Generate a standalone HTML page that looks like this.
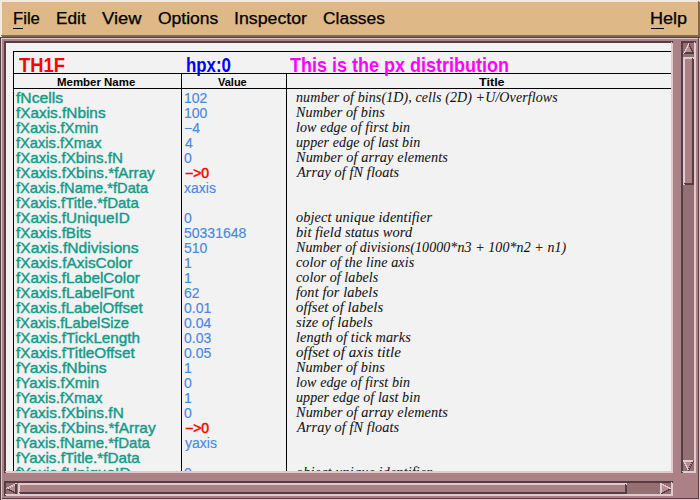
<!DOCTYPE html><html><head><meta charset="utf-8"><style>
html,body{margin:0;padding:0;background:#ab8186}
div,span{position:absolute;box-sizing:border-box}
.t{font-variant-ligatures:none;white-space:pre;line-height:24px;height:24px;transform-origin:0 0;-webkit-text-stroke:0.4px currentColor}
.mn{font-family:"Liberation Sans",sans-serif;font-size:16px;color:#000;-webkit-text-stroke:0.25px currentColor}
.nm{font-family:"Liberation Sans",sans-serif;font-size:15px;color:#129a89}
.vl{font-family:"Liberation Sans",sans-serif;font-size:14px;color:#4a88e0;-webkit-text-stroke:0.15px currentColor}
.pt{font-family:"Liberation Sans",sans-serif;font-size:14px;color:#f00;-webkit-text-stroke:0.5px currentColor}
.ti{font-family:"Liberation Serif",serif;font-style:italic;font-size:14px;color:#111111;-webkit-text-stroke:0.05px currentColor;font-variant-ligatures:none;letter-spacing:0.1px}
.hd{font-family:"Liberation Sans",sans-serif;font-weight:bold;font-size:11px;color:#000;-webkit-text-stroke:0}
.bg{font-family:"Liberation Sans",sans-serif;font-weight:bold;font-size:20px;-webkit-text-stroke:0}
html,body{width:700px;height:500px;overflow:hidden}</style></head><body>
<div style="left:0px;top:0px;width:700px;height:37px;background:#deb887;"></div>
<div style="left:0px;top:0px;width:700px;height:2px;background:#f5ead9;"></div>
<div style="left:0px;top:0px;width:2px;height:37px;background:#f5ead9;"></div>
<div style="left:2px;top:36px;width:698px;height:1px;background:#806a4b;"></div>
<div style="left:699px;top:2px;width:1px;height:35px;background:#806a4b;"></div>
<div style="left:1px;top:35px;width:699px;height:1px;background:#806a4b;"></div>
<div style="left:698px;top:1px;width:1px;height:36px;background:#806a4b;"></div>
<div style="left:0px;top:37px;width:700px;height:1px;background:#543e43;"></div>
<div style="left:0px;top:37px;width:1px;height:463px;background:#543e43;"></div>
<div style="left:1px;top:499px;width:699px;height:1px;background:#dfcbcf;"></div>
<div style="left:699px;top:38px;width:1px;height:462px;background:#dfcbcf;"></div>
<div style="left:1px;top:38px;width:698px;height:1px;background:#dfcbcf;"></div>
<div style="left:1px;top:38px;width:1px;height:461px;background:#dfcbcf;"></div>
<div style="left:2px;top:498px;width:697px;height:1px;background:#543e43;"></div>
<div style="left:698px;top:39px;width:1px;height:460px;background:#543e43;"></div>
<div style="left:698px;top:38px;width:1px;height:1px;background:#543e43;"></div>
<div style="left:4px;top:41px;width:669px;height:2px;background:#543e43;"></div>
<div style="left:4px;top:41px;width:2px;height:432px;background:#543e43;"></div>
<div style="left:6px;top:472px;width:667px;height:1px;background:#dfcbcf;"></div>
<div style="left:672px;top:43px;width:1px;height:430px;background:#dfcbcf;"></div>
<div style="left:5px;top:471px;width:668px;height:1px;background:#dfcbcf;"></div>
<div style="left:671px;top:42px;width:1px;height:431px;background:#dfcbcf;"></div>
<div style="left:6px;top:43px;width:665px;height:428px;background:#f2f2f2;"></div>
<div style="left:681px;top:41px;width:15px;height:2px;background:#543e43;"></div>
<div style="left:681px;top:41px;width:2px;height:432px;background:#543e43;"></div>
<div style="left:683px;top:472px;width:13px;height:1px;background:#dfcbcf;"></div>
<div style="left:695px;top:43px;width:1px;height:430px;background:#dfcbcf;"></div>
<div style="left:682px;top:471px;width:14px;height:1px;background:#dfcbcf;"></div>
<div style="left:694px;top:42px;width:1px;height:431px;background:#dfcbcf;"></div>
<div style="left:683px;top:43px;width:11px;height:428px;background:#946f73;"></div>
<div style="left:683px;top:57px;width:11px;height:2px;background:#dfcbcf;"></div>
<div style="left:683px;top:57px;width:2px;height:128px;background:#dfcbcf;"></div>
<div style="left:685px;top:184px;width:9px;height:1px;background:#543e43;"></div>
<div style="left:693px;top:59px;width:1px;height:126px;background:#543e43;"></div>
<div style="left:684px;top:183px;width:10px;height:1px;background:#543e43;"></div>
<div style="left:692px;top:58px;width:1px;height:127px;background:#543e43;"></div>
<div style="left:685px;top:59px;width:7px;height:124px;background:#ab8186;"></div>
<div style="left:4px;top:481px;width:669px;height:2px;background:#543e43;"></div>
<div style="left:4px;top:481px;width:2px;height:15px;background:#543e43;"></div>
<div style="left:6px;top:495px;width:667px;height:1px;background:#dfcbcf;"></div>
<div style="left:672px;top:483px;width:1px;height:13px;background:#dfcbcf;"></div>
<div style="left:5px;top:494px;width:668px;height:1px;background:#dfcbcf;"></div>
<div style="left:671px;top:482px;width:1px;height:14px;background:#dfcbcf;"></div>
<div style="left:6px;top:483px;width:665px;height:11px;background:#946f73;"></div>
<div style="left:18px;top:483px;width:609px;height:2px;background:#dfcbcf;"></div>
<div style="left:18px;top:483px;width:2px;height:11px;background:#dfcbcf;"></div>
<div style="left:20px;top:493px;width:607px;height:1px;background:#543e43;"></div>
<div style="left:626px;top:485px;width:1px;height:9px;background:#543e43;"></div>
<div style="left:19px;top:492px;width:608px;height:1px;background:#543e43;"></div>
<div style="left:625px;top:484px;width:1px;height:10px;background:#543e43;"></div>
<div style="left:20px;top:485px;width:605px;height:7px;background:#ab8186;"></div>
<svg style="position:absolute;left:683px;top:43px" width="11" height="11" shape-rendering="crispEdges"><rect x="5" y="0" width="1" height="1" fill="#dfcbcf"/><rect x="6" y="1" width="1" height="1" fill="#543e43"/><rect x="5" y="1" width="1" height="1" fill="#dfcbcf"/><rect x="5" y="2" width="1" height="1" fill="#dfcbcf"/><rect x="6" y="2" width="1" height="1" fill="#543e43"/><rect x="4" y="2" width="1" height="1" fill="#dfcbcf"/><rect x="5" y="3" width="1" height="1" fill="#b68b91"/><rect x="6" y="3" width="1" height="1" fill="#543e43"/><rect x="7" y="3" width="1" height="1" fill="#543e43"/><rect x="4" y="3" width="1" height="1" fill="#dfcbcf"/><rect x="4" y="4" width="1" height="1" fill="#dfcbcf"/><rect x="5" y="4" width="1" height="1" fill="#b68b91"/><rect x="6" y="4" width="1" height="1" fill="#b68b91"/><rect x="7" y="4" width="1" height="1" fill="#543e43"/><rect x="3" y="4" width="1" height="1" fill="#dfcbcf"/><rect x="4" y="5" width="1" height="1" fill="#b68b91"/><rect x="5" y="5" width="1" height="1" fill="#b68b91"/><rect x="6" y="5" width="1" height="1" fill="#b68b91"/><rect x="7" y="5" width="1" height="1" fill="#543e43"/><rect x="8" y="5" width="1" height="1" fill="#543e43"/><rect x="3" y="5" width="1" height="1" fill="#dfcbcf"/><rect x="3" y="6" width="1" height="1" fill="#dfcbcf"/><rect x="4" y="6" width="1" height="1" fill="#b68b91"/><rect x="5" y="6" width="1" height="1" fill="#b68b91"/><rect x="6" y="6" width="1" height="1" fill="#b68b91"/><rect x="7" y="6" width="1" height="1" fill="#b68b91"/><rect x="8" y="6" width="1" height="1" fill="#543e43"/><rect x="2" y="6" width="1" height="1" fill="#dfcbcf"/><rect x="3" y="7" width="1" height="1" fill="#b68b91"/><rect x="4" y="7" width="1" height="1" fill="#b68b91"/><rect x="5" y="7" width="1" height="1" fill="#b68b91"/><rect x="6" y="7" width="1" height="1" fill="#b68b91"/><rect x="7" y="7" width="1" height="1" fill="#b68b91"/><rect x="8" y="7" width="1" height="1" fill="#543e43"/><rect x="9" y="7" width="1" height="1" fill="#543e43"/><rect x="2" y="7" width="1" height="1" fill="#dfcbcf"/><rect x="2" y="8" width="1" height="1" fill="#dfcbcf"/><rect x="3" y="8" width="1" height="1" fill="#b68b91"/><rect x="4" y="8" width="1" height="1" fill="#b68b91"/><rect x="5" y="8" width="1" height="1" fill="#b68b91"/><rect x="6" y="8" width="1" height="1" fill="#b68b91"/><rect x="7" y="8" width="1" height="1" fill="#b68b91"/><rect x="8" y="8" width="1" height="1" fill="#b68b91"/><rect x="9" y="8" width="1" height="1" fill="#543e43"/><rect x="1" y="8" width="1" height="1" fill="#dfcbcf"/><rect x="2" y="9" width="1" height="1" fill="#543e43"/><rect x="3" y="9" width="1" height="1" fill="#543e43"/><rect x="4" y="9" width="1" height="1" fill="#543e43"/><rect x="5" y="9" width="1" height="1" fill="#543e43"/><rect x="6" y="9" width="1" height="1" fill="#543e43"/><rect x="7" y="9" width="1" height="1" fill="#543e43"/><rect x="8" y="9" width="1" height="1" fill="#543e43"/><rect x="9" y="9" width="1" height="1" fill="#543e43"/><rect x="10" y="9" width="1" height="1" fill="#543e43"/><rect x="1" y="9" width="1" height="1" fill="#dfcbcf"/><rect x="1" y="10" width="1" height="1" fill="#543e43"/><rect x="2" y="10" width="1" height="1" fill="#543e43"/><rect x="3" y="10" width="1" height="1" fill="#543e43"/><rect x="4" y="10" width="1" height="1" fill="#543e43"/><rect x="5" y="10" width="1" height="1" fill="#543e43"/><rect x="6" y="10" width="1" height="1" fill="#543e43"/><rect x="7" y="10" width="1" height="1" fill="#543e43"/><rect x="8" y="10" width="1" height="1" fill="#543e43"/><rect x="9" y="10" width="1" height="1" fill="#543e43"/><rect x="10" y="10" width="1" height="1" fill="#543e43"/><rect x="0" y="10" width="1" height="1" fill="#dfcbcf"/></svg>
<svg style="position:absolute;left:683px;top:460px" width="11" height="11" shape-rendering="crispEdges"><rect x="1" y="0" width="1" height="1" fill="#dfcbcf"/><rect x="2" y="0" width="1" height="1" fill="#dfcbcf"/><rect x="3" y="0" width="1" height="1" fill="#dfcbcf"/><rect x="4" y="0" width="1" height="1" fill="#dfcbcf"/><rect x="5" y="0" width="1" height="1" fill="#dfcbcf"/><rect x="6" y="0" width="1" height="1" fill="#dfcbcf"/><rect x="7" y="0" width="1" height="1" fill="#dfcbcf"/><rect x="8" y="0" width="1" height="1" fill="#dfcbcf"/><rect x="9" y="0" width="1" height="1" fill="#dfcbcf"/><rect x="0" y="0" width="1" height="1" fill="#dfcbcf"/><rect x="1" y="1" width="1" height="1" fill="#dfcbcf"/><rect x="2" y="1" width="1" height="1" fill="#dfcbcf"/><rect x="3" y="1" width="1" height="1" fill="#dfcbcf"/><rect x="4" y="1" width="1" height="1" fill="#dfcbcf"/><rect x="5" y="1" width="1" height="1" fill="#dfcbcf"/><rect x="6" y="1" width="1" height="1" fill="#dfcbcf"/><rect x="7" y="1" width="1" height="1" fill="#dfcbcf"/><rect x="8" y="1" width="1" height="1" fill="#dfcbcf"/><rect x="9" y="1" width="1" height="1" fill="#dfcbcf"/><rect x="0" y="1" width="1" height="1" fill="#dfcbcf"/><rect x="10" y="1" width="1" height="1" fill="#543e43"/><rect x="2" y="2" width="1" height="1" fill="#b68b91"/><rect x="3" y="2" width="1" height="1" fill="#b68b91"/><rect x="4" y="2" width="1" height="1" fill="#b68b91"/><rect x="5" y="2" width="1" height="1" fill="#b68b91"/><rect x="6" y="2" width="1" height="1" fill="#b68b91"/><rect x="7" y="2" width="1" height="1" fill="#b68b91"/><rect x="8" y="2" width="1" height="1" fill="#543e43"/><rect x="9" y="2" width="1" height="1" fill="#543e43"/><rect x="1" y="2" width="1" height="1" fill="#dfcbcf"/><rect x="2" y="3" width="1" height="1" fill="#dfcbcf"/><rect x="3" y="3" width="1" height="1" fill="#b68b91"/><rect x="4" y="3" width="1" height="1" fill="#b68b91"/><rect x="5" y="3" width="1" height="1" fill="#b68b91"/><rect x="6" y="3" width="1" height="1" fill="#b68b91"/><rect x="7" y="3" width="1" height="1" fill="#b68b91"/><rect x="8" y="3" width="1" height="1" fill="#b68b91"/><rect x="9" y="3" width="1" height="1" fill="#543e43"/><rect x="1" y="3" width="1" height="1" fill="#dfcbcf"/><rect x="3" y="4" width="1" height="1" fill="#b68b91"/><rect x="4" y="4" width="1" height="1" fill="#b68b91"/><rect x="5" y="4" width="1" height="1" fill="#b68b91"/><rect x="6" y="4" width="1" height="1" fill="#b68b91"/><rect x="7" y="4" width="1" height="1" fill="#543e43"/><rect x="8" y="4" width="1" height="1" fill="#543e43"/><rect x="2" y="4" width="1" height="1" fill="#dfcbcf"/><rect x="3" y="5" width="1" height="1" fill="#dfcbcf"/><rect x="4" y="5" width="1" height="1" fill="#b68b91"/><rect x="5" y="5" width="1" height="1" fill="#b68b91"/><rect x="6" y="5" width="1" height="1" fill="#b68b91"/><rect x="7" y="5" width="1" height="1" fill="#b68b91"/><rect x="8" y="5" width="1" height="1" fill="#543e43"/><rect x="2" y="5" width="1" height="1" fill="#dfcbcf"/><rect x="4" y="6" width="1" height="1" fill="#b68b91"/><rect x="5" y="6" width="1" height="1" fill="#b68b91"/><rect x="6" y="6" width="1" height="1" fill="#543e43"/><rect x="7" y="6" width="1" height="1" fill="#543e43"/><rect x="3" y="6" width="1" height="1" fill="#dfcbcf"/><rect x="4" y="7" width="1" height="1" fill="#dfcbcf"/><rect x="5" y="7" width="1" height="1" fill="#b68b91"/><rect x="6" y="7" width="1" height="1" fill="#b68b91"/><rect x="7" y="7" width="1" height="1" fill="#543e43"/><rect x="3" y="7" width="1" height="1" fill="#dfcbcf"/><rect x="5" y="8" width="1" height="1" fill="#543e43"/><rect x="6" y="8" width="1" height="1" fill="#543e43"/><rect x="4" y="8" width="1" height="1" fill="#dfcbcf"/><rect x="5" y="9" width="1" height="1" fill="#dfcbcf"/><rect x="6" y="9" width="1" height="1" fill="#543e43"/><rect x="4" y="9" width="1" height="1" fill="#dfcbcf"/><rect x="5" y="10" width="1" height="1" fill="#543e43"/></svg>
<svg style="position:absolute;left:6px;top:483px" width="11" height="11" shape-rendering="crispEdges"><rect x="0" y="5" width="1" height="1" fill="#dfcbcf"/><rect x="1" y="5" width="1" height="1" fill="#b68b91"/><rect x="1" y="6" width="1" height="1" fill="#543e43"/><rect x="1" y="4" width="1" height="1" fill="#dfcbcf"/><rect x="2" y="5" width="1" height="1" fill="#dfcbcf"/><rect x="2" y="6" width="1" height="1" fill="#543e43"/><rect x="2" y="4" width="1" height="1" fill="#dfcbcf"/><rect x="3" y="4" width="1" height="1" fill="#b68b91"/><rect x="3" y="5" width="1" height="1" fill="#b68b91"/><rect x="3" y="6" width="1" height="1" fill="#543e43"/><rect x="3" y="7" width="1" height="1" fill="#543e43"/><rect x="3" y="3" width="1" height="1" fill="#dfcbcf"/><rect x="4" y="4" width="1" height="1" fill="#dfcbcf"/><rect x="4" y="5" width="1" height="1" fill="#b68b91"/><rect x="4" y="6" width="1" height="1" fill="#b68b91"/><rect x="4" y="7" width="1" height="1" fill="#543e43"/><rect x="4" y="3" width="1" height="1" fill="#dfcbcf"/><rect x="5" y="3" width="1" height="1" fill="#b68b91"/><rect x="5" y="4" width="1" height="1" fill="#b68b91"/><rect x="5" y="5" width="1" height="1" fill="#b68b91"/><rect x="5" y="6" width="1" height="1" fill="#b68b91"/><rect x="5" y="7" width="1" height="1" fill="#543e43"/><rect x="5" y="8" width="1" height="1" fill="#543e43"/><rect x="5" y="2" width="1" height="1" fill="#dfcbcf"/><rect x="6" y="3" width="1" height="1" fill="#dfcbcf"/><rect x="6" y="4" width="1" height="1" fill="#b68b91"/><rect x="6" y="5" width="1" height="1" fill="#b68b91"/><rect x="6" y="6" width="1" height="1" fill="#b68b91"/><rect x="6" y="7" width="1" height="1" fill="#b68b91"/><rect x="6" y="8" width="1" height="1" fill="#543e43"/><rect x="6" y="2" width="1" height="1" fill="#dfcbcf"/><rect x="7" y="2" width="1" height="1" fill="#b68b91"/><rect x="7" y="3" width="1" height="1" fill="#b68b91"/><rect x="7" y="4" width="1" height="1" fill="#b68b91"/><rect x="7" y="5" width="1" height="1" fill="#b68b91"/><rect x="7" y="6" width="1" height="1" fill="#b68b91"/><rect x="7" y="7" width="1" height="1" fill="#b68b91"/><rect x="7" y="8" width="1" height="1" fill="#543e43"/><rect x="7" y="9" width="1" height="1" fill="#543e43"/><rect x="7" y="1" width="1" height="1" fill="#dfcbcf"/><rect x="8" y="2" width="1" height="1" fill="#dfcbcf"/><rect x="8" y="3" width="1" height="1" fill="#b68b91"/><rect x="8" y="4" width="1" height="1" fill="#b68b91"/><rect x="8" y="5" width="1" height="1" fill="#b68b91"/><rect x="8" y="6" width="1" height="1" fill="#b68b91"/><rect x="8" y="7" width="1" height="1" fill="#b68b91"/><rect x="8" y="8" width="1" height="1" fill="#b68b91"/><rect x="8" y="9" width="1" height="1" fill="#543e43"/><rect x="8" y="1" width="1" height="1" fill="#dfcbcf"/><rect x="9" y="1" width="1" height="1" fill="#543e43"/><rect x="9" y="2" width="1" height="1" fill="#543e43"/><rect x="9" y="3" width="1" height="1" fill="#543e43"/><rect x="9" y="4" width="1" height="1" fill="#543e43"/><rect x="9" y="5" width="1" height="1" fill="#543e43"/><rect x="9" y="6" width="1" height="1" fill="#543e43"/><rect x="9" y="7" width="1" height="1" fill="#543e43"/><rect x="9" y="8" width="1" height="1" fill="#543e43"/><rect x="9" y="9" width="1" height="1" fill="#543e43"/><rect x="9" y="10" width="1" height="1" fill="#543e43"/><rect x="9" y="0" width="1" height="1" fill="#dfcbcf"/><rect x="10" y="1" width="1" height="1" fill="#543e43"/><rect x="10" y="2" width="1" height="1" fill="#543e43"/><rect x="10" y="3" width="1" height="1" fill="#543e43"/><rect x="10" y="4" width="1" height="1" fill="#543e43"/><rect x="10" y="5" width="1" height="1" fill="#543e43"/><rect x="10" y="6" width="1" height="1" fill="#543e43"/><rect x="10" y="7" width="1" height="1" fill="#543e43"/><rect x="10" y="8" width="1" height="1" fill="#543e43"/><rect x="10" y="9" width="1" height="1" fill="#543e43"/><rect x="10" y="10" width="1" height="1" fill="#543e43"/><rect x="10" y="0" width="1" height="1" fill="#dfcbcf"/></svg>
<svg style="position:absolute;left:660px;top:483px" width="11" height="11" shape-rendering="crispEdges"><rect x="0" y="1" width="1" height="1" fill="#dfcbcf"/><rect x="0" y="2" width="1" height="1" fill="#dfcbcf"/><rect x="0" y="3" width="1" height="1" fill="#dfcbcf"/><rect x="0" y="4" width="1" height="1" fill="#dfcbcf"/><rect x="0" y="5" width="1" height="1" fill="#dfcbcf"/><rect x="0" y="6" width="1" height="1" fill="#dfcbcf"/><rect x="0" y="7" width="1" height="1" fill="#dfcbcf"/><rect x="0" y="8" width="1" height="1" fill="#dfcbcf"/><rect x="0" y="9" width="1" height="1" fill="#dfcbcf"/><rect x="0" y="0" width="1" height="1" fill="#dfcbcf"/><rect x="0" y="10" width="1" height="1" fill="#dfcbcf"/><rect x="1" y="1" width="1" height="1" fill="#dfcbcf"/><rect x="1" y="2" width="1" height="1" fill="#dfcbcf"/><rect x="1" y="3" width="1" height="1" fill="#dfcbcf"/><rect x="1" y="4" width="1" height="1" fill="#dfcbcf"/><rect x="1" y="5" width="1" height="1" fill="#dfcbcf"/><rect x="1" y="6" width="1" height="1" fill="#dfcbcf"/><rect x="1" y="7" width="1" height="1" fill="#dfcbcf"/><rect x="1" y="8" width="1" height="1" fill="#dfcbcf"/><rect x="1" y="9" width="1" height="1" fill="#dfcbcf"/><rect x="1" y="0" width="1" height="1" fill="#dfcbcf"/><rect x="1" y="10" width="1" height="1" fill="#543e43"/><rect x="2" y="2" width="1" height="1" fill="#b68b91"/><rect x="2" y="3" width="1" height="1" fill="#b68b91"/><rect x="2" y="4" width="1" height="1" fill="#b68b91"/><rect x="2" y="5" width="1" height="1" fill="#b68b91"/><rect x="2" y="6" width="1" height="1" fill="#b68b91"/><rect x="2" y="7" width="1" height="1" fill="#b68b91"/><rect x="2" y="8" width="1" height="1" fill="#b68b91"/><rect x="2" y="9" width="1" height="1" fill="#543e43"/><rect x="2" y="10" width="1" height="1" fill="#543e43"/><rect x="2" y="1" width="1" height="1" fill="#dfcbcf"/><rect x="3" y="2" width="1" height="1" fill="#dfcbcf"/><rect x="3" y="3" width="1" height="1" fill="#b68b91"/><rect x="3" y="4" width="1" height="1" fill="#b68b91"/><rect x="3" y="5" width="1" height="1" fill="#b68b91"/><rect x="3" y="6" width="1" height="1" fill="#b68b91"/><rect x="3" y="7" width="1" height="1" fill="#b68b91"/><rect x="3" y="8" width="1" height="1" fill="#b68b91"/><rect x="3" y="9" width="1" height="1" fill="#543e43"/><rect x="3" y="1" width="1" height="1" fill="#dfcbcf"/><rect x="4" y="3" width="1" height="1" fill="#b68b91"/><rect x="4" y="4" width="1" height="1" fill="#b68b91"/><rect x="4" y="5" width="1" height="1" fill="#b68b91"/><rect x="4" y="6" width="1" height="1" fill="#b68b91"/><rect x="4" y="7" width="1" height="1" fill="#b68b91"/><rect x="4" y="8" width="1" height="1" fill="#543e43"/><rect x="4" y="9" width="1" height="1" fill="#543e43"/><rect x="4" y="2" width="1" height="1" fill="#dfcbcf"/><rect x="5" y="3" width="1" height="1" fill="#dfcbcf"/><rect x="5" y="4" width="1" height="1" fill="#b68b91"/><rect x="5" y="5" width="1" height="1" fill="#b68b91"/><rect x="5" y="6" width="1" height="1" fill="#b68b91"/><rect x="5" y="7" width="1" height="1" fill="#b68b91"/><rect x="5" y="8" width="1" height="1" fill="#543e43"/><rect x="5" y="2" width="1" height="1" fill="#dfcbcf"/><rect x="6" y="4" width="1" height="1" fill="#b68b91"/><rect x="6" y="5" width="1" height="1" fill="#b68b91"/><rect x="6" y="6" width="1" height="1" fill="#b68b91"/><rect x="6" y="7" width="1" height="1" fill="#543e43"/><rect x="6" y="8" width="1" height="1" fill="#543e43"/><rect x="6" y="3" width="1" height="1" fill="#dfcbcf"/><rect x="7" y="4" width="1" height="1" fill="#dfcbcf"/><rect x="7" y="5" width="1" height="1" fill="#b68b91"/><rect x="7" y="6" width="1" height="1" fill="#b68b91"/><rect x="7" y="7" width="1" height="1" fill="#543e43"/><rect x="7" y="3" width="1" height="1" fill="#dfcbcf"/><rect x="8" y="5" width="1" height="1" fill="#b68b91"/><rect x="8" y="6" width="1" height="1" fill="#543e43"/><rect x="8" y="7" width="1" height="1" fill="#543e43"/><rect x="8" y="4" width="1" height="1" fill="#dfcbcf"/><rect x="9" y="5" width="1" height="1" fill="#dfcbcf"/><rect x="9" y="6" width="1" height="1" fill="#543e43"/><rect x="9" y="4" width="1" height="1" fill="#dfcbcf"/><rect x="10" y="6" width="1" height="1" fill="#543e43"/><rect x="10" y="5" width="1" height="1" fill="#dfcbcf"/></svg>
<span class="t mn" style="left:12.96px;top:7px;;transform:scaleX(1.0417)">File</span>
<span class="t mn" style="left:55.92px;top:7px;;transform:scaleX(1.0769)">Edit</span>
<span class="t mn" style="left:102.00px;top:7px;;transform:scaleX(1.1471)">View</span>
<span class="t mn" style="left:158.00px;top:7px;;transform:scaleX(1.0926)">Options</span>
<span class="t mn" style="left:233.89px;top:7px;;transform:scaleX(1.1094)">Inspector</span>
<span class="t mn" style="left:323.00px;top:7px;;transform:scaleX(1.0893)">Classes</span>
<span class="t mn" style="left:649.87px;top:7px;;transform:scaleX(1.1290)">Help</span>
<div style="left:13px;top:28px;width:10px;height:1px;background:#000;"></div>
<div style="left:651px;top:28px;width:13px;height:1px;background:#000;"></div>
<div style="left:6px;top:43px;width:665px;height:428px;overflow:hidden"><div style="left:-6px;top:-43px;width:700px;height:500px">
<div style="left:13px;top:51px;width:700px;height:1px;background:#000;"></div>
<div style="left:13px;top:51px;width:1px;height:500px;background:#000;"></div>
<div style="left:13px;top:73px;width:700px;height:1px;background:#000;"></div>
<div style="left:13px;top:88px;width:700px;height:1px;background:#000;"></div>
<div style="left:181px;top:73px;width:1px;height:500px;background:#000;"></div>
<div style="left:286px;top:73px;width:1px;height:500px;background:#000;"></div>
<span class="t bg" style="left:19.00px;top:53px;color:#f00;transform:scaleX(0.9167)">TH1F</span>
<span class="t bg" style="left:186.16px;top:53px;color:#00f;transform:scaleX(0.8431)">hpx:0</span>
<span class="t bg" style="left:290.10px;top:53px;color:#f0f;transform:scaleX(0.9000)">This is the px distribution</span>
<span class="t hd" style="left:57.00px;top:70px;;transform:scaleX(1.0405)">Member Name</span>
<span class="t hd" style="left:218.00px;top:70px;">Value</span>
<span class="t hd" style="left:479.00px;top:70px;;transform:scaleX(1.1429)">Title</span>
<span class="t nm" style="left:16.00px;top:86px;;transform:scaleX(1.0455)">fNcells</span>
<span class="t vl" style="left:184.00px;top:86px;">102</span>
<span class="t ti" style="left:296.00px;top:86px;">number of bins(1D), cells (2D) +U/Overflows</span>
<span class="t nm" style="left:16.00px;top:101px;;transform:scaleX(1.0233)">fXaxis.fNbins</span>
<span class="t vl" style="left:184.00px;top:101px;">100</span>
<span class="t ti" style="left:296.00px;top:101px;;transform:scaleX(1.0116)">Number of bins</span>
<span class="t nm" style="left:16.00px;top:116px;;transform:scaleX(0.9878)">fXaxis.fXmin</span>
<span class="t vl" style="left:184.00px;top:116px;">−4</span>
<span class="t ti" style="left:296.00px;top:116px;">low edge of first bin</span>
<span class="t nm" style="left:16.00px;top:131px;;transform:scaleX(0.9767)">fXaxis.fXmax</span>
<span class="t vl" style="left:185.00px;top:131px;">4</span>
<span class="t ti" style="left:296.00px;top:131px;">upper edge of last bin</span>
<span class="t nm" style="left:16.00px;top:146px;;transform:scaleX(1.0096)">fXaxis.fXbins.fN</span>
<span class="t vl" style="left:184.00px;top:146px;">0</span>
<span class="t ti" style="left:296.00px;top:146px;;transform:scaleX(1.0203)">Number of array elements</span>
<span class="t nm" style="left:16.00px;top:161px;;transform:scaleX(1.0147)">fXaxis.fXbins.*fArray</span>
<span class="t pt" style="left:185.00px;top:161px;">−&gt;0</span>
<span class="t ti" style="left:297.02px;top:161px;;transform:scaleX(1.0200)">Array of fN floats</span>
<span class="t nm" style="left:16.00px;top:176px;;transform:scaleX(0.9778)">fXaxis.fName.*fData</span>
<span class="t vl" style="left:184.00px;top:176px;">xaxis</span>
<span class="t nm" style="left:16.00px;top:191px;">fXaxis.fTitle.*fData</span>
<span class="t nm" style="left:16.00px;top:206px;;transform:scaleX(1.0182)">fXaxis.fUniqueID</span>
<span class="t vl" style="left:184.00px;top:206px;">0</span>
<span class="t ti" style="left:296.00px;top:206px;;transform:scaleX(1.0227)">object unique identifier</span>
<span class="t nm" style="left:16.00px;top:221px;;transform:scaleX(1.0137)">fXaxis.fBits</span>
<span class="t vl" style="left:184.00px;top:221px;">50331648</span>
<span class="t ti" style="left:296.00px;top:221px;;transform:scaleX(1.0268)">bit field status word</span>
<span class="t nm" style="left:16.00px;top:236px;;transform:scaleX(1.0431)">fXaxis.fNdivisions</span>
<span class="t vl" style="left:184.00px;top:236px;">510</span>
<span class="t ti" style="left:296.00px;top:236px;;transform:scaleX(0.9963)">Number of divisions(10000*n3 + 100*n2 + n1)</span>
<span class="t nm" style="left:16.00px;top:251px;;transform:scaleX(1.0268)">fXaxis.fAxisColor</span>
<span class="t vl" style="left:184.00px;top:251px;">1</span>
<span class="t ti" style="left:296.00px;top:251px;;transform:scaleX(1.0086)">color of the line axis</span>
<span class="t nm" style="left:16.00px;top:266px;;transform:scaleX(1.0165)">fXaxis.fLabelColor</span>
<span class="t vl" style="left:184.00px;top:266px;">1</span>
<span class="t ti" style="left:296.00px;top:266px;">color of labels</span>
<span class="t nm" style="left:16.00px;top:281px;;transform:scaleX(1.0174)">fXaxis.fLabelFont</span>
<span class="t vl" style="left:184.00px;top:281px;">62</span>
<span class="t ti" style="left:296.00px;top:281px;;transform:scaleX(1.0253)">font for labels</span>
<span class="t nm" style="left:16.00px;top:296px;;transform:scaleX(1.0080)">fXaxis.fLabelOffset</span>
<span class="t vl" style="left:184.00px;top:296px;">0.01</span>
<span class="t ti" style="left:296.00px;top:296px;;transform:scaleX(1.0488)">offset of labels</span>
<span class="t nm" style="left:16.00px;top:311px;;transform:scaleX(0.9825)">fXaxis.fLabelSize</span>
<span class="t vl" style="left:184.00px;top:311px;">0.04</span>
<span class="t ti" style="left:296.00px;top:311px;;transform:scaleX(1.0417)">size of labels</span>
<span class="t nm" style="left:16.00px;top:326px;;transform:scaleX(1.0165)">fXaxis.fTickLength</span>
<span class="t vl" style="left:184.00px;top:326px;">0.03</span>
<span class="t ti" style="left:296.00px;top:326px;;transform:scaleX(1.0180)">length of tick marks</span>
<span class="t nm" style="left:16.00px;top:341px;;transform:scaleX(1.0172)">fXaxis.fTitleOffset</span>
<span class="t vl" style="left:184.00px;top:341px;">0.05</span>
<span class="t ti" style="left:296.00px;top:341px;;transform:scaleX(1.0722)">offset of axis title</span>
<span class="t nm" style="left:16.00px;top:356px;;transform:scaleX(1.0471)">fYaxis.fNbins</span>
<span class="t vl" style="left:184.00px;top:356px;">1</span>
<span class="t ti" style="left:296.00px;top:356px;;transform:scaleX(1.0116)">Number of bins</span>
<span class="t nm" style="left:16.00px;top:371px;;transform:scaleX(1.0123)">fYaxis.fXmin</span>
<span class="t vl" style="left:184.00px;top:371px;">0</span>
<span class="t ti" style="left:296.00px;top:371px;">low edge of first bin</span>
<span class="t nm" style="left:16.00px;top:386px;">fYaxis.fXmax</span>
<span class="t vl" style="left:184.00px;top:386px;">1</span>
<span class="t ti" style="left:296.00px;top:386px;">upper edge of last bin</span>
<span class="t nm" style="left:16.00px;top:401px;;transform:scaleX(1.0291)">fYaxis.fXbins.fN</span>
<span class="t vl" style="left:184.00px;top:401px;">0</span>
<span class="t ti" style="left:296.00px;top:401px;;transform:scaleX(1.0203)">Number of array elements</span>
<span class="t nm" style="left:16.00px;top:416px;;transform:scaleX(1.0296)">fYaxis.fXbins.*fArray</span>
<span class="t pt" style="left:185.00px;top:416px;">−&gt;0</span>
<span class="t ti" style="left:297.02px;top:416px;;transform:scaleX(1.0200)">Array of fN floats</span>
<span class="t nm" style="left:16.00px;top:431px;">fYaxis.fName.*fData</span>
<span class="t vl" style="left:185.00px;top:431px;">yaxis</span>
<span class="t nm" style="left:16.00px;top:446px;;transform:scaleX(1.0165)">fYaxis.fTitle.*fData</span>
<span class="t nm" style="left:16.00px;top:461px;;transform:scaleX(1.0367)">fYaxis.fUniqueID</span>
<span class="t vl" style="left:184.00px;top:461px;">0</span>
<span class="t ti" style="left:296.00px;top:461px;;transform:scaleX(1.0227)">object unique identifier</span>
</div></div>
</body></html>
